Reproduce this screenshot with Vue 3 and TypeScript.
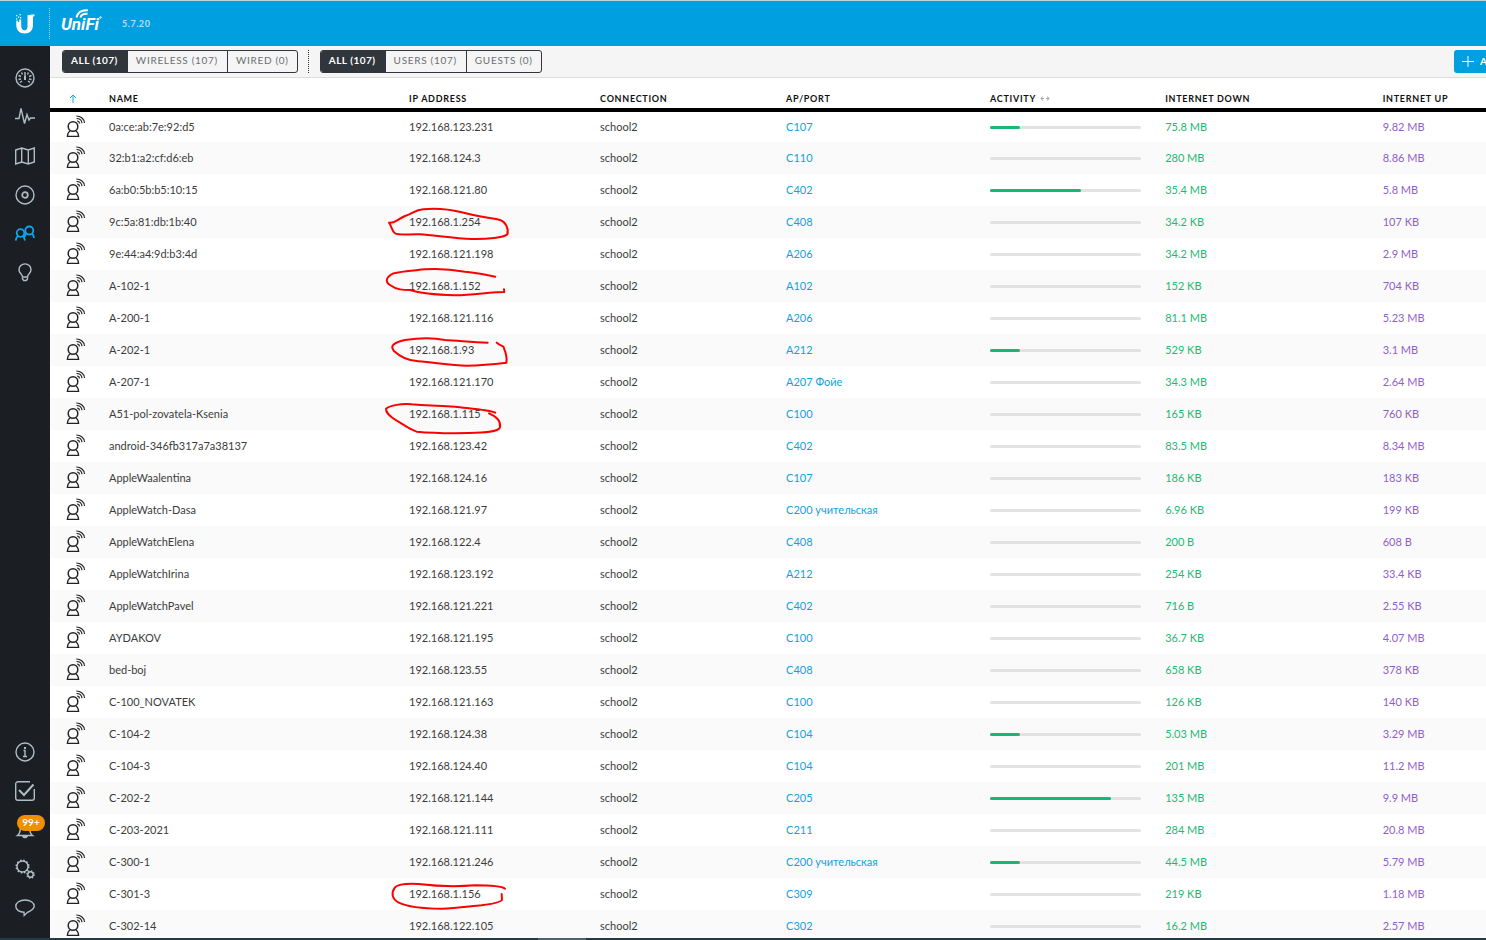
<script setup lang="ts">
import { ref } from 'vue'

interface Client {
  name: string
  ip: string
  ap: string
  activity: number
  down: string
  up: string
  mark?: Mark
}

interface Mark {
  viewBox: string
  path: string
}

const marks: Record<string, Mark> = {
  '192.168.1.254': {
    viewBox: '0 -9 450 150',
    path: 'M42 68 C60 70 60 62 90 48 C115 40 120 30 145 28 C185 24 215 26 260 37 C300 48 345 54 375 60 C392 65 402 88 397 103 C385 112 340 118 290 117 C240 116 180 106 135 103 C100 102 72 106 60 100 C50 92 50 78 42 68',
  },
  '192.168.1.152': {
    viewBox: '0 183 450 150',
    path: 'M361 230 C330 224 300 217 270 215 C230 208 190 205 150 208 C110 212 75 214 55 220 C32 232 30 245 45 255 C65 270 85 270 105 270 C130 278 180 284 240 286 C300 284 350 276 388 276 L387 268',
  },
  '192.168.1.93': {
    viewBox: '0 -15 450 150',
    path: 'M338 38 C290 36 250 32 210 30 C180 24 130 24 90 30 C55 38 45 48 56 62 C75 80 100 92 130 94 C180 98 230 106 275 107 C320 106 360 102 394 98 C398 80 390 62 385 50 C375 46 370 44 365 38',
  },
  '192.168.1.115': {
    viewBox: '0 177 450 150',
    path: 'M361 248 C345 240 290 236 240 230 C190 228 150 226 110 223 C80 220 45 226 33 236 C32 245 45 260 65 272 C80 280 100 296 125 305 C170 309 230 310 280 309 C330 308 370 306 375 292 C378 275 370 262 342 250',
  },
  '192.168.1.156': {
    viewBox: '0 -3 450 150',
    path: 'M390 56 C380 48 340 46 300 46 C250 50 180 48 130 42 C90 40 70 42 60 52 C48 68 50 85 70 97 C100 112 150 116 200 116 C250 114 290 108 320 106 C350 102 375 98 381 90 L380 72',
  },
}

const data: [string, string, string, number, string, string][] = [
  ['0a:ce:ab:7e:92:d5', '192.168.123.231', 'C107', 20, '75.8 MB', '9.82 MB'],
  ['32:b1:a2:cf:d6:eb', '192.168.124.3', 'C110', 0, '280 MB', '8.86 MB'],
  ['6a:b0:5b:b5:10:15', '192.168.121.80', 'C402', 60, '35.4 MB', '5.8 MB'],
  ['9c:5a:81:db:1b:40', '192.168.1.254', 'C408', 0, '34.2 KB', '107 KB'],
  ['9e:44:a4:9d:b3:4d', '192.168.121.198', 'A206', 0, '34.2 MB', '2.9 MB'],
  ['A-102-1', '192.168.1.152', 'A102', 0, '152 KB', '704 KB'],
  ['A-200-1', '192.168.121.116', 'A206', 0, '81.1 MB', '5.23 MB'],
  ['A-202-1', '192.168.1.93', 'A212', 20, '529 KB', '3.1 MB'],
  ['A-207-1', '192.168.121.170', 'A207 Фойе', 0, '34.3 MB', '2.64 MB'],
  ['A51-pol-zovatela-Ksenia', '192.168.1.115', 'C100', 0, '165 KB', '760 KB'],
  ['android-346fb317a7a38137', '192.168.123.42', 'C402', 0, '83.5 MB', '8.34 MB'],
  ['AppleWaalentina', '192.168.124.16', 'C107', 0, '186 KB', '183 KB'],
  ['AppleWatch-Dasa', '192.168.121.97', 'C200 учительская', 0, '6.96 KB', '199 KB'],
  ['AppleWatchElena', '192.168.122.4', 'C408', 0, '200 B', '608 B'],
  ['AppleWatchIrina', '192.168.123.192', 'A212', 0, '254 KB', '33.4 KB'],
  ['AppleWatchPavel', '192.168.121.221', 'C402', 0, '716 B', '2.55 KB'],
  ['AYDAKOV', '192.168.121.195', 'C100', 0, '36.7 KB', '4.07 MB'],
  ['bed-boj', '192.168.123.55', 'C408', 0, '658 KB', '378 KB'],
  ['C-100_NOVATEK', '192.168.121.163', 'C100', 0, '126 KB', '140 KB'],
  ['C-104-2', '192.168.124.38', 'C104', 20, '5.03 MB', '3.29 MB'],
  ['C-104-3', '192.168.124.40', 'C104', 0, '201 MB', '11.2 MB'],
  ['C-202-2', '192.168.121.144', 'C205', 80, '135 MB', '9.9 MB'],
  ['C-203-2021', '192.168.121.111', 'C211', 0, '284 MB', '20.8 MB'],
  ['C-300-1', '192.168.121.246', 'C200 учительская', 20, '44.5 MB', '5.79 MB'],
  ['C-301-3', '192.168.1.156', 'C309', 0, '219 KB', '1.18 MB'],
  ['C-302-14', '192.168.122.105', 'C302', 0, '16.2 MB', '2.57 MB'],
]

const clients: Client[] = data.map(([name, ip, ap, activity, down, up]) => ({
  name, ip, ap, activity, down, up, mark: marks[ip],
}))

const media = ['ALL (107)', 'WIRELESS (107)', 'WIRED (0)']
const kinds = ['ALL (107)', 'USERS (107)', 'GUESTS (0)']
const activeMedia = ref(0)
const activeKind = ref(0)
</script>

<template>
  <div class="app">
    <header class="topbar">
      <a class="brand" href="#">
        <svg width="20" height="20" viewBox="0 0 20 20" fill="#fff">
          <path d="M12.500 1.300C14.500.6 17 .4 19.500.4V2c-1 .2-1.500.8-1.500 1.800V11c0 5-3.200 8.500-8.300 8.500C4.500 19.500 1.300 16.300 1.300 11V6.500h1.500V8h1.400V5.500h2V12c0 2.700 1.300 4.200 3.400 4.200 2 0 2.900-1.300 2.900-4z" />
          <path d="M1 1h1.300v1.300H1zM4.500 0h1.300v1.300H4.500zM3 2.500h1.300v1.300H3zM1 4.200h1.200v1.200H1zM5 3h1.200v1.500H5z" />
        </svg>
      </a>
      <div class="product">
        <svg class="signal" width="28" height="10" viewBox="0 0 28 10" fill="none" stroke="#fff" stroke-width="2">
          <path d="M1.500 8.500C2.500 4 6.500.9 13 1.300M5.500 8.500C6 6 8.500 4.500 12.500 4.800" />
          <circle cx="25.500" cy="8.500" r=".8" stroke-width="1" />
        </svg>
        <span class="wordmark">UniFi</span>
      </div>
      <span class="version">5.7.20</span>
    </header>

    <nav class="sidebar">
      <div class="group">
        <a href="#"><svg width="20" height="20" viewBox="0 0 20 20"><circle cx="10" cy="10" r="9" /><path d="M10 4v7M6.500 4.500l1 2M13.500 4.500l-1 2M3.500 7.500l2.500 1M16.500 7.500l-2.500 1M3.500 11.500l2.500-.5M16.500 11.500l-2.500-.5M5 14.500l2-1.500M15 14.500l-2-1.500" /><path d="M10 8v4" stroke-width="2" /></svg></a>
        <a href="#"><svg width="20" height="20" viewBox="0 0 20 20"><path d="M0 11.500h4l2-10 3.500 15 2.500-9 2 5.500 1.500-2H20" /></svg></a>
        <a href="#"><svg width="20" height="20" viewBox="0 0 20 20"><path d="M.7 4l6-2 6.600 2 6-2v14l-6 2-6.600-2-6 2zM6.700 2v14M13.300 4v14" /></svg></a>
        <a href="#"><svg width="20" height="20" viewBox="0 0 20 20"><circle cx="10" cy="10" r="9" /><circle cx="10" cy="10" r="2.800" stroke-width="1.700" /></svg></a>
        <a href="#" class="current"><svg width="20" height="20" viewBox="0 0 20 20"><circle cx="5.500" cy="9" r="3.800" /><circle cx="14.300" cy="6.500" r="4" /><path d="M3 12c-1.500 1-2 2.500-2.300 4.500M8 12c1 1 1.700 2.500 2 4.500M11.500 9.500c-1 .8-1.800 2-2 3.500M17 9.500c1.300 1 1.700 2.300 2 4.500" /></svg></a>
        <a href="#"><svg width="20" height="20" viewBox="0 0 20 20"><path d="M7.500 14c0-3-3.500-3.500-3.500-7.300a6 5.800 0 0 1 12 0c0 3.800-3.500 4.300-3.500 7.300z" /><path d="M7.500 14.500V16l1.200 1.500h2.600l1.200-1.500v-1.500" /></svg></a>
      </div>
      <div class="group">
        <a href="#"><svg width="20" height="20" viewBox="0 0 20 20"><circle cx="10" cy="10" r="9" /><path d="M8.500 8.500H10v6M8 14.500h4" /><path d="M10 5v2" stroke-width="2" /></svg></a>
        <a href="#"><svg width="20" height="20" viewBox="0 0 20 20"><path d="M15 .7H3A2.300 2.300 0 0 0 .7 3v14A2.300 2.300 0 0 0 3 19.300h14a2.300 2.300 0 0 0 2.300-2.300V8" /><path d="M4 9l5 5 9.500-10.500" stroke-width="2" /></svg></a>
        <a href="#" class="alerts"><svg width="20" height="20" viewBox="0 0 20 20"><path d="M2.500 15.500c3-2 2.500-5 3-8 .4-3 2-4 4.500-4s4.100 1 4.500 4c.5 3 0 6 3 8z" /><path d="M8 16.500c.5 1.500 3.500 1.500 4 0z" fill="currentColor" /></svg><span class="badge">99+</span></a>
        <a href="#"><svg width="20" height="20" viewBox="0 0 20 20"><circle cx="7.500" cy="7.500" r="5.500" /><circle cx="7.500" cy="7.500" r="6.300" stroke-width="1.500" stroke-dasharray="1.600 1.700" /><circle cx="15.500" cy="15.500" r="2.700" /><circle cx="15.500" cy="15.500" r="3.600" stroke-width="1.500" stroke-dasharray="1.300 1.527" /></svg></a>
        <a href="#"><svg width="20" height="20" viewBox="0 0 20 20"><path d="M9 14.300C4.500 14.300.8 12 .8 8.300S4.800 2 10 2s9.200 2.500 9.200 6.300c0 3-3.500 4.700-7 6.200l-3 3z" /></svg></a>
      </div>
    </nav>

    <main class="content">
      <div class="toolbar">
        <div class="segmented">
          <button v-for="(label, i) in media" :key="label" type="button" :class="{ active: i === activeMedia }" @click="activeMedia = i">{{ label }}</button>
        </div>
        <span class="divider"></span>
        <div class="segmented">
          <button v-for="(label, i) in kinds" :key="label" type="button" :class="{ active: i === activeKind }" @click="activeKind = i">{{ label }}</button>
        </div>
        <button class="add" type="button">
          <svg width="12" height="12" viewBox="0 0 12 12" stroke="#fff"><path d="M6 0v11M0 5.500h12" /></svg>
          <span>A</span>
        </button>
      </div>

      <table class="clients">
        <colgroup>
          <col class="c-icon"><col class="c-name"><col class="c-ip"><col class="c-conn"><col class="c-ap"><col class="c-act"><col class="c-down"><col>
        </colgroup>
        <thead>
          <tr>
            <th class="icon">
              <svg width="8" height="10" viewBox="0 0 8 10" fill="none" stroke="#1ba5e0"><path d="M4 9V1M1 4l3-3 3 3" /></svg>
            </th>
            <th>NAME</th>
            <th>IP ADDRESS</th>
            <th>CONNECTION</th>
            <th>AP/PORT</th>
            <th>ACTIVITY <svg class="spread" width="10" height="6" viewBox="0 0 10 6" fill="none" stroke="#a5a5a5"><path d="M3 .5L.8 2.500 3 4.500M7 .5l2.200 2L7 4.500" /><path d="M1 2.500h3M6 2.500h3" /></svg></th>
            <th>INTERNET DOWN</th>
            <th>INTERNET UP</th>
          </tr>
        </thead>
        <tbody>
          <tr v-for="c in clients" :key="c.name">
            <td class="icon">
              <svg width="20" height="22" viewBox="0 0 20 22" fill="none" stroke="#222">
                <circle cx="7" cy="11.500" r="4.800" stroke-width="1.500" />
                <path d="M4 16c-1.500.8-2.400 2.500-2.600 5.300h11.200c-.2-2.800-1.100-4.500-2.600-5.300" stroke-width="1.300" />
                <path d="M10.300 1c4.500 0 8 3 8.200 7M10.500 3.500c3 0 5.200 1.800 5.500 4.700M11 6c1.300 0 2.400.9 2.500 2.500" stroke-width="1.200" />
              </svg>
            </td>
            <td>{{ c.name }}</td>
            <td>
              <span class="ip">{{ c.ip }}<svg v-if="c.mark" class="mark" width="150" height="50" :viewBox="c.mark.viewBox"><path :d="c.mark.path" /></svg></span>
            </td>
            <td>school2</td>
            <td><a href="#">{{ c.ap }}</a></td>
            <td class="activity"><div class="track"><div class="fill" :style="{ width: c.activity + '%' }"></div></div></td>
            <td class="down">{{ c.down }}</td>
            <td class="up">{{ c.up }}</td>
          </tr>
        </tbody>
      </table>
    </main>
    <footer class="strip"><span></span></footer>
  </div>
</template>

<style>
body {
  margin: 0;
}
</style>

<style scoped>
.app {
  display: grid;
  grid-template: 46px minmax(0, 1fr) 2px / 50px minmax(0, 1fr);
  height: 100vh;
  overflow: hidden;
  background: #fff;
  color: #3c3c3c;
  font: 11px/16px Lato, "Open Sans", sans-serif;
}
.app * {
  box-sizing: border-box;
}
.topbar {
  grid-column: 1 / -1;
  display: flex;
  align-items: center;
  background: #009fe0;
  border-top: 1px solid #bfd3dc;
  color: #fff;
}
.brand {
  display: flex;
  align-items: center;
  justify-content: center;
  width: 50px;
  height: 31px;
  border-right: 1px dotted #9edcf5;
}
.product {
  position: relative;
  width: 60px;
  padding-left: 11px;
}
.wordmark {
  font: italic bold 17px/24px Roboto, sans-serif;
}
.signal {
  position: absolute;
  left: 25px;
  top: -3px;
}
.version {
  margin-left: 12px;
  font-size: 9px;
  font-weight: bold;
  letter-spacing: 0.06em;
  color: #b4e3f7;
}
.sidebar {
  display: flex;
  flex-direction: column;
  justify-content: space-between;
  padding: 12px 0 11px;
  background: #1b1e23;
}
.group a {
  position: relative;
  display: flex;
  align-items: center;
  justify-content: center;
  height: 39px;
  color: #afbec4;
}
.group .current {
  color: #11a4f0;
}
.group svg {
  fill: none;
  stroke: currentColor;
  stroke-width: 1.4;
}
.group .current svg {
  stroke-width: 1.8;
}
.badge {
  position: absolute;
  left: 17px;
  top: 5px;
  width: 28px;
  height: 16px;
  border-radius: 8px;
  background: #f09000;
  color: #fff;
  font-size: 10px;
  font-weight: bold;
  line-height: 14px;
  text-align: center;
}
.content {
  overflow: hidden;
}
.toolbar {
  display: flex;
  align-items: center;
  height: 32px;
  padding-left: 12px;
  background: #f5f5f5;
  border-bottom: 1px solid #dcdcdc;
}
.segmented {
  display: flex;
  height: 23px;
  border: 1px solid #30363c;
  border-radius: 3px;
  overflow: hidden;
}
.segmented button {
  padding: 0 9px 2px 8px;
  border: 0;
  background: transparent;
  color: #6b6f73;
  font: 10px/19px Lato, sans-serif;
  letter-spacing: 0.07em;
}
.segmented button:last-child {
  padding-right: 8px;
}
.segmented button + button {
  border-left: 1px solid #30363c;
}
.segmented .active {
  background: #30363c;
  color: #fff;
  font-weight: bold;
  letter-spacing: 0.05em;
}
.divider {
  height: 23px;
  margin: 0 11px 0 10px;
  border-left: 1px dotted #30363c;
}
.add {
  display: flex;
  align-items: center;
  gap: 6px;
  width: 32px;
  height: 23px;
  margin-left: auto;
  padding: 0 0 0 8px;
  overflow: hidden;
  border: 0;
  border-radius: 3px 0 0 3px;
  background: #009fe0;
  color: #fff;
  font: bold 10px/19px Lato, sans-serif;
}
.add svg {
  flex: none;
}
.clients {
  width: 100%;
  table-layout: fixed;
  border-collapse: separate;
  border-spacing: 0;
}
.c-icon { width: 59px; }
.c-name { width: 20.9%; }
.c-ip { width: 13.3%; }
.c-conn { width: 12.95%; }
.c-ap { width: 14.2%; }
.c-act { width: 12.2%; }
.c-down { width: 15.15%; }
th {
  height: 34px;
  padding: 12px 0 0;
  border-bottom: 4px solid #000;
  color: #111;
  font-size: 9px;
  line-height: 16px;
  letter-spacing: 0.08em;
  text-align: left;
  white-space: nowrap;
}
td {
  height: 32px;
  padding: 0;
  white-space: nowrap;
}
tbody tr:first-child td {
  height: 30px;
}
tbody tr:nth-child(even) {
  background: #fafafa;
}
th.icon {
  padding-left: 19px;
}
td.icon {
  padding: 0 0 2px 16px;
}
.icon svg {
  display: block;
}
.spread {
  margin-left: 2px;
}
td a {
  color: #0fa2de;
  text-decoration: none;
}
.ip {
  position: relative;
}
.mark {
  position: absolute;
  left: -34px;
  top: -18px;
  z-index: 1;
  fill: none;
  stroke: #fb0000;
  stroke-width: 6;
  stroke-linecap: round;
  stroke-linejoin: round;
  pointer-events: none;
}
.activity {
  padding-right: 24px;
}
.track {
  height: 3px;
  border-radius: 2px;
  background: #e2e2e2;
}
.fill {
  height: 3px;
  border-radius: 2px;
  background: #17b872;
}
.down {
  color: #1db975;
}
.up {
  color: #8d5fc9;
}
.strip {
  grid-column: 1 / -1;
  background: #213a45;
}
.strip span {
  display: block;
  width: 48px;
  height: 2px;
  margin-left: 538px;
  background: #4c626c;
}
</style>
